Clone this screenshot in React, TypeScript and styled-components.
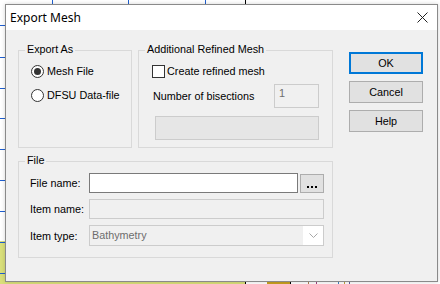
import React from "react";
import styled, { createGlobalStyle } from "styled-components";

const Global = createGlobalStyle`
  html, body { margin: 0; padding: 0; background: #ffffff; }
  body { width: 440px; height: 284px; overflow: hidden; }
  * { box-sizing: border-box; }
`;

const Desktop = styled.div`
  position: relative;
  width: 440px;
  height: 284px;
  padding: 4px 0 0 5px;
  background: #ffffff;
`;

const Backdrop = styled.svg`
  position: absolute;
  left: 0;
  top: 0;
`;

const Dialog = styled.div`
  position: relative;
  width: 433px;
  height: 278px;
  border: 1px solid #8a8a8a;
  background: #f0f0f0;
  display: flex;
  flex-direction: column;
  box-shadow: 0 0 4px rgba(0, 0, 0, 0.18);
`;

const TitleBar = styled.div`
  height: 25px;
  background: #ffffff;
  display: flex;
  align-items: center;
  justify-content: space-between;
  padding: 0 9px 0 4px;
  font-family: "Noto Sans", "Open Sans", sans-serif;
  font-size: 12px;
  color: #000;
`;

const Body = styled.div`
  flex: 1;
  display: grid;
  grid-template-columns: 315px 74px;
  column-gap: 16px;
  padding: 20px 0 0 12px;
  font-family: "Liberation Sans", Arial, sans-serif;
  font-size: 10.8px;
  color: #000;
`;

const LeftCol = styled.div`
  display: flex;
  flex-direction: column;
  gap: 13px;
`;

const TopRow = styled.div`
  display: flex;
  gap: 6px;
`;

const Group = styled.div<{ $w: number; $h: number }>`
  position: relative;
  width: ${(p) => p.$w}px;
  height: ${(p) => p.$h}px;
  border: 1px solid #d9d9d9;
`;

const Legend = styled.span`
  position: absolute;
  left: 6px;
  top: -8px;
  padding: 0 2px;
  line-height: 13px;
  background: #f0f0f0;
  white-space: nowrap;
`;

const RadioList = styled.div`
  display: flex;
  flex-direction: column;
  gap: 11px;
  padding: 14px 0 0 12px;
`;

const Choice = styled.label`
  display: flex;
  align-items: center;
  gap: 3px;
  height: 13px;
  line-height: 13px;
  white-space: nowrap;
`;

const RadioMark = styled.span<{ $on?: boolean }>`
  width: 13px;
  height: 13px;
  border-radius: 50%;
  border: 1px solid #333333;
  background: #ffffff;
  display: flex;
  align-items: center;
  justify-content: center;
  &::after {
    content: "";
    width: 7px;
    height: 7px;
    border-radius: 50%;
    background: ${(p) => (p.$on ? "#333333" : "transparent")};
  }
`;

const CheckMark = styled.span`
  width: 13px;
  height: 13px;
  border: 1px solid #333333;
  background: #ffffff;
  margin-right: -1px;
`;

const RefinedInner = styled.div`
  display: flex;
  flex-direction: column;
  padding: 14px 13px 0 13px;
`;

const BisectRow = styled.div`
  display: flex;
  align-items: center;
  justify-content: space-between;
  margin-top: 6px;
  padding-left: 1px;
`;

const SmallField = styled.div`
  width: 45px;
  height: 24px;
  border: 1px solid #cccccc;
  background: #f0f0f0;
  color: #6d6d6d;
  padding: 2px 0 0 4px;
  line-height: 13px;
`;

const DisabledBar = styled.div`
  height: 24px;
  margin: 8px 0 0 3px;
  border: 1px solid #cccccc;
  background: #e6e6e6;
`;

const FileRows = styled.div`
  display: grid;
  grid-template-columns: 59px 235px;
  row-gap: 6px;
  align-items: center;
  padding: 11px 0 0 11px;
`;

const RowLabel = styled.span`
  white-space: nowrap;
`;

const FieldLine = styled.div`
  display: flex;
  gap: 2px;
`;

const TextBox = styled.div<{ $disabled?: boolean }>`
  flex: 1;
  height: 20px;
  border: 1px solid ${(p) => (p.$disabled ? "#cccccc" : "#7a7a7a")};
  background: ${(p) => (p.$disabled ? "#f0f0f0" : "#ffffff")};
`;

const DotsButton = styled.div`
  width: 24px;
  height: 19px;
  margin-top: 1px;
  border: 1px solid #adadad;
  background: #e1e1e1;
  display: flex;
  align-items: flex-end;
  justify-content: center;
  padding-bottom: 4px;
  gap: 2px;
`;

const Dot = styled.span`
  width: 2px;
  height: 2px;
  background: #000;
`;

const Combo = styled.div`
  height: 21px;
  border: 1px solid #cccccc;
  background: #f0f0f0;
  display: flex;
  color: #6d6d6d;
`;

const ComboText = styled.span`
  flex: 1;
  padding: 3px 0 0 2px;
  line-height: 13px;
`;

const ComboArrow = styled.span`
  width: 20px;
  background: #ffffff;
  display: flex;
  align-items: center;
  justify-content: center;
`;

const ButtonCol = styled.div`
  display: flex;
  flex-direction: column;
  gap: 7px;
  padding-top: 2px;
`;

const Button = styled.div<{ $default?: boolean }>`
  height: 22px;
  border: ${(p) => (p.$default ? "2px solid #0078d7" : "1px solid #adadad")};
  background: #e1e1e1;
  display: flex;
  align-items: center;
  justify-content: center;
  line-height: 13px;
`;

const CloseIcon = () => (
  <svg width="11" height="11" viewBox="0 0 11 11">
    <path d="M0.5 0.5 L10.5 10.5 M10.5 0.5 L0.5 10.5" stroke="#222" strokeWidth="1" fill="none" />
  </svg>
);

const Chevron = () => (
  <svg width="9" height="5" viewBox="0 0 9 5">
    <path d="M0.5 0.5 L4.5 4.5 L8.5 0.5" stroke="#a8a8a8" strokeWidth="1" fill="none" />
  </svg>
);

const tickYs = [25, 57, 88, 118, 149, 180, 211, 242, 273];

const Background = () => (
  <Backdrop width="440" height="284" viewBox="0 0 440 284">
    <rect x="0" y="0" width="440" height="284" fill="#ffffff" />
    <rect x="0" y="241" width="5" height="43" fill="#d9df7a" />
    <rect x="0" y="281" width="246" height="3" fill="#d9df7a" />
    {tickYs.map((y) => (
      <rect key={y} x="0" y={y} width="5" height="1" fill="#1f5fd0" />
    ))}
    {[52, 128, 205].map((x) => (
      <rect key={x} x={x} y="0" width="1" height="4" fill="#1f5fd0" />
    ))}
    <rect x="245" y="0" width="1" height="4" fill="#000" />
    <rect x="245" y="281" width="1" height="3" fill="#000" />
    <rect x="267" y="281" width="24" height="3" fill="#c8a020" />
    <rect x="290" y="281" width="1" height="3" fill="#000" />
    <rect x="308" y="281" width="1" height="3" fill="#b08050" />
    <rect x="316" y="281" width="1" height="3" fill="#a04080" />
    <rect x="338" y="281" width="1" height="3" fill="#4080c0" />
    <rect x="344" y="281" width="1" height="3" fill="#c0a040" />
    <rect x="349" y="281" width="1" height="3" fill="#6060a0" />
  </Backdrop>
);

export default function App() {
  return (
    <>
      <Global />
      <Desktop>
        <Background />
        <Dialog>
          <TitleBar>
            <span>Export Mesh</span>
            <CloseIcon />
          </TitleBar>
          <Body>
            <LeftCol>
              <TopRow>
                <Group $w={114} $h={98}>
                  <Legend>Export As</Legend>
                  <RadioList>
                    <Choice>
                      <RadioMark $on />
                      Mesh File
                    </Choice>
                    <Choice>
                      <RadioMark />
                      DFSU Data-file
                    </Choice>
                  </RadioList>
                </Group>
                <Group $w={195} $h={98}>
                  <Legend>Additional Refined Mesh</Legend>
                  <RefinedInner>
                    <Choice>
                      <CheckMark />
                      Create refined mesh
                    </Choice>
                    <BisectRow>
                      <span>Number of bisections</span>
                      <SmallField>1</SmallField>
                    </BisectRow>
                    <DisabledBar />
                  </RefinedInner>
                </Group>
              </TopRow>
              <Group $w={315} $h={97}>
                <Legend>File</Legend>
                <FileRows>
                  <RowLabel>File name:</RowLabel>
                  <FieldLine>
                    <TextBox />
                    <DotsButton>
                      <Dot />
                      <Dot />
                      <Dot />
                    </DotsButton>
                  </FieldLine>
                  <RowLabel>Item name:</RowLabel>
                  <FieldLine>
                    <TextBox $disabled />
                  </FieldLine>
                  <RowLabel>Item type:</RowLabel>
                  <Combo>
                    <ComboText>Bathymetry</ComboText>
                    <ComboArrow>
                      <Chevron />
                    </ComboArrow>
                  </Combo>
                </FileRows>
              </Group>
            </LeftCol>
            <ButtonCol>
              <Button $default>OK</Button>
              <Button>Cancel</Button>
              <Button>Help</Button>
            </ButtonCol>
          </Body>
        </Dialog>
      </Desktop>
    </>
  );
}
